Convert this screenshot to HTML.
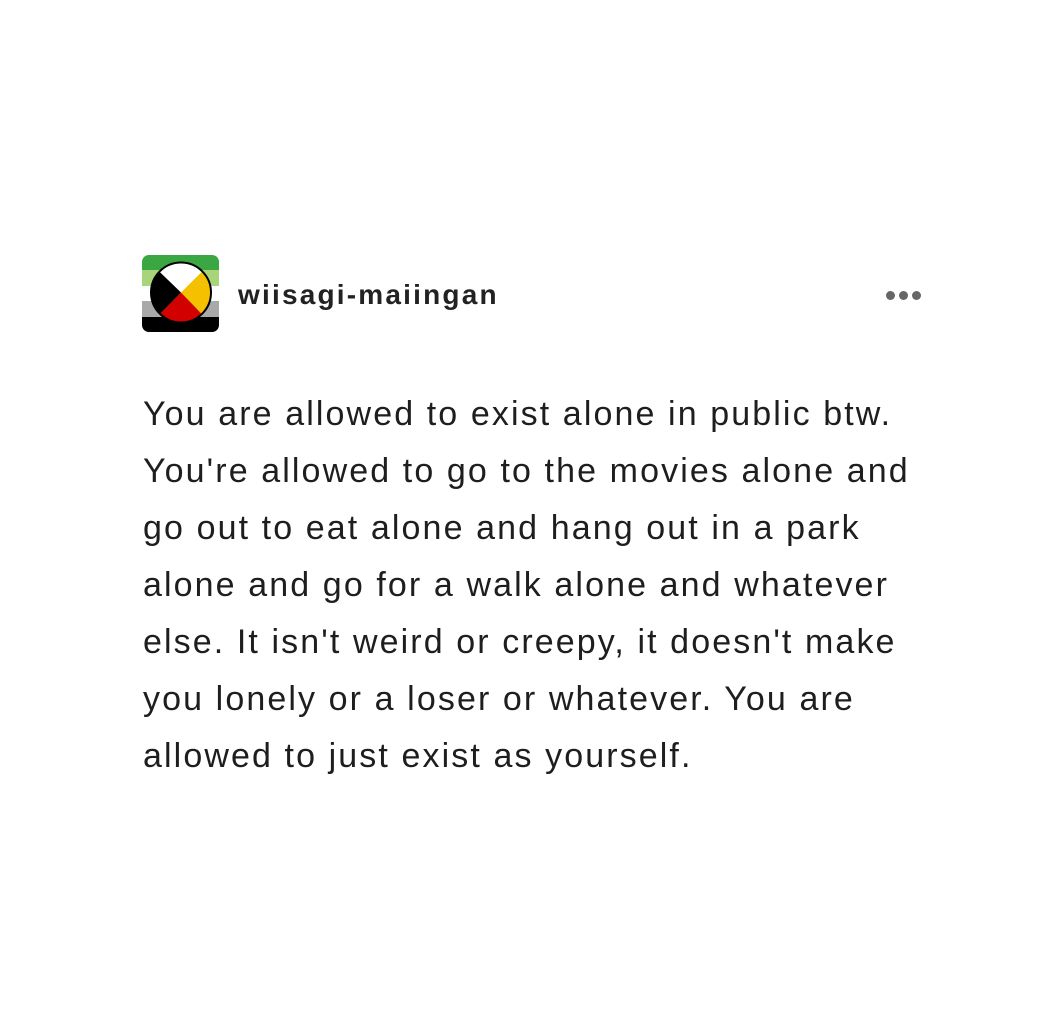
<!DOCTYPE html>
<html><head><style>
body{margin:0;width:1064px;height:1028px;background:#fff;position:relative;font-family:"Liberation Sans",sans-serif;color:#1e1e1e;overflow:hidden}
.av{position:absolute;left:142px;top:255px;width:77px;height:77px;border-radius:7px;overflow:hidden}
.av div{height:15.4px}
.name{position:absolute;left:238px;top:279px;font-size:28px;font-weight:bold;letter-spacing:2.2px;color:#222}
.dots{position:absolute;left:886px;top:287px}
.dots span{display:inline-block;width:9px;height:9px;border-radius:50%;background:#666;margin-right:4px}
.txt{position:absolute;left:143px;top:386px;font-size:34px;line-height:57px;letter-spacing:2.1px;white-space:nowrap}
</style></head><body>
<div class="av">
<div style="background:#3aa742"></div><div style="background:#a8d47a"></div><div style="background:#fff"></div><div style="background:#a9a9a9"></div><div style="background:#000"></div>
<svg style="position:absolute;left:0;top:0" width="77" height="77" viewBox="0 0 77 77">
<clipPath id="c"><circle cx="39" cy="37.5" r="30"/></clipPath>
<g clip-path="url(#c)">
<polygon points="39,37.5 0,0 77,0" fill="#fff"/>
<polygon points="39,37.5 77,0 77,77" fill="#f5c000"/>
<polygon points="39,37.5 77,77 0,77" fill="#d30000"/>
<polygon points="39,37.5 0,77 0,0" fill="#000"/>
</g>
<circle cx="39" cy="37.5" r="30" fill="none" stroke="#000" stroke-width="2"/>
</svg>
</div>
<div class="name">wiisagi-maiingan</div>
<div class="dots"><span></span><span></span><span></span></div>
<div class="txt">You are allowed to exist alone in public btw.<br>You're allowed to go to the movies alone and<br>go out to eat alone and hang out in a park<br>alone and go for a walk alone and whatever<br>else. It isn't weird or creepy, it doesn't make<br>you lonely or a loser or whatever. You are<br>allowed to just exist as yourself.</div>
</body></html>
